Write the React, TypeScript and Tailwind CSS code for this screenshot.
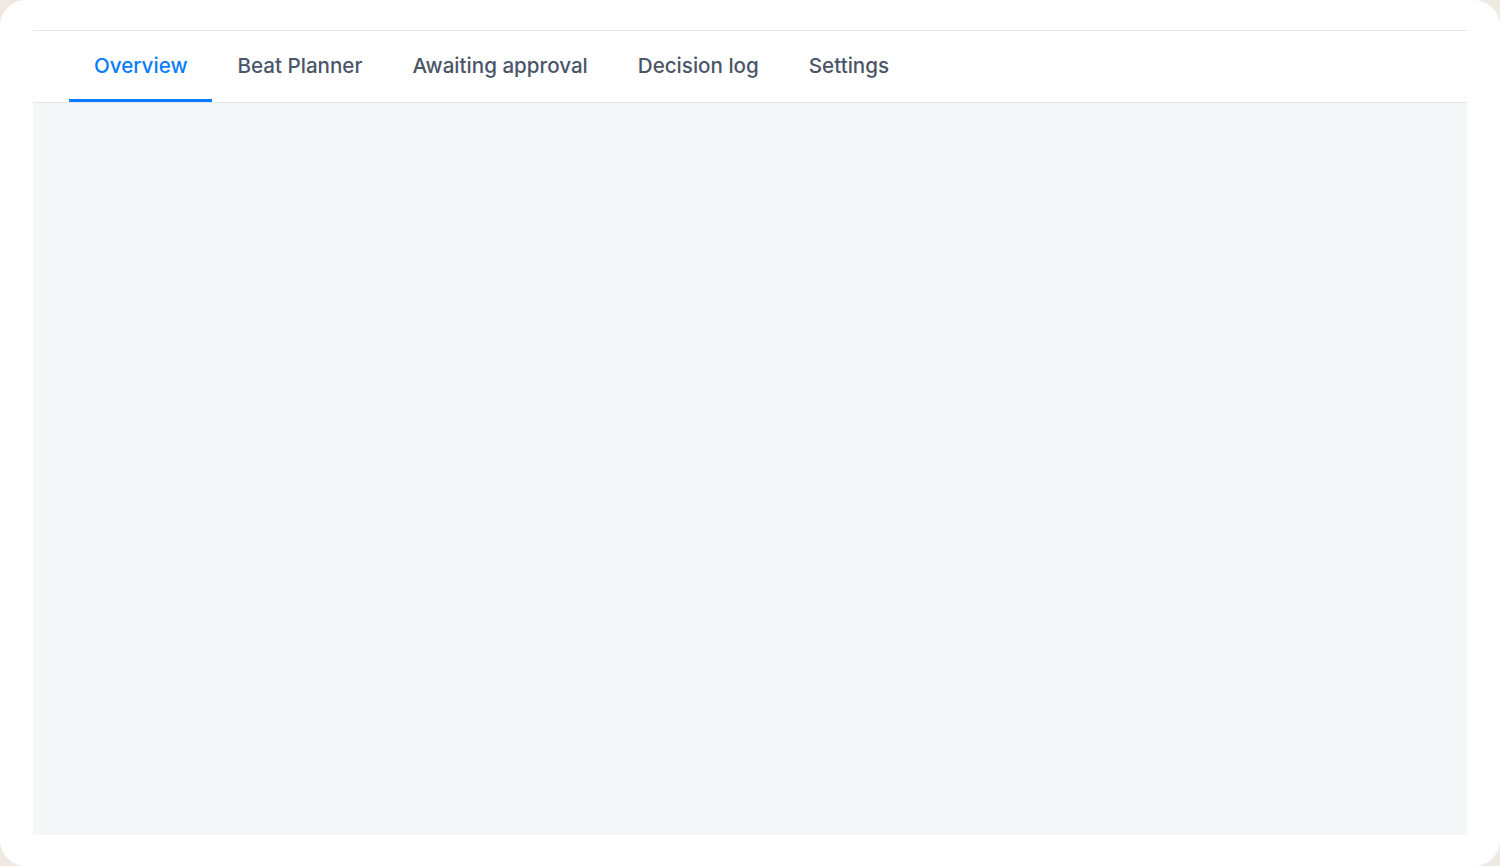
import React, { useState } from 'react';

const tabs = ['Overview', 'Beat Planner', 'Awaiting approval', 'Decision log', 'Settings'];

const App: React.FC = () => {
  const [active, setActive] = useState(0);

  return (
    <div className="h-[866px] w-full bg-[#efe9e2] font-['Inter','Noto_Sans',sans-serif]">
      <div className="flex h-full w-full flex-col rounded-[26px] bg-white px-[33px] pt-[30px] pb-[31px]">
        <div className="flex h-full flex-col border-t border-[#dfe7f1]">
          <nav className="flex h-[72px] border-b border-[#dfe7f1] pl-[36px]">
            {tabs.map((tab, i) => (
              <button
                key={tab}
                onClick={() => setActive(i)}
                className={
                  i === active
                    ? 'flex h-full items-center border-b-[3px] border-[#0a7cff] px-[25px] pt-[2px] text-[20.6px] font-medium text-[#0a7cff]'
                    : 'flex h-full items-center border-b-[3px] border-transparent px-[25px] pt-[2px] text-[20.6px] font-medium text-[#4a5568]'
                }
              >
                {tab}
              </button>
            ))}
          </nav>
          <main className="flex-1 bg-[#f4f6f8]" />
        </div>
      </div>
    </div>
  );
};

export default App;
